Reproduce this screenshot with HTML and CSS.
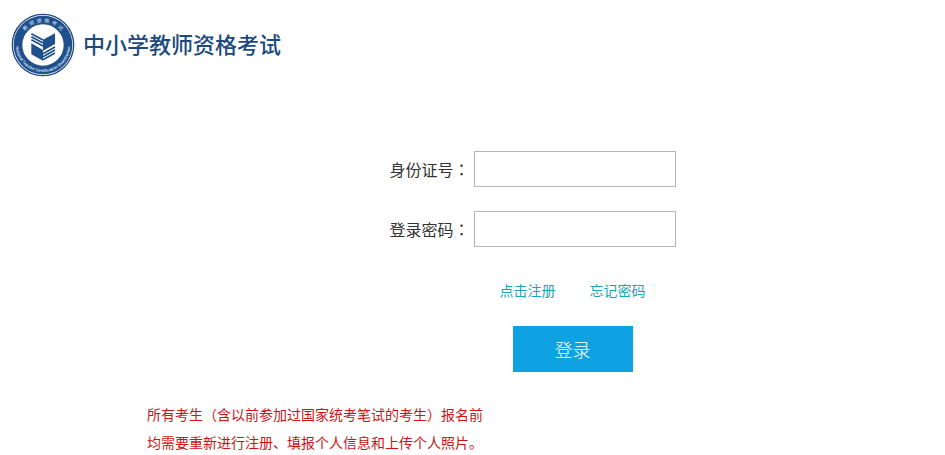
FILE: index.html
```html
<!DOCTYPE html>
<html lang="zh-CN">
<head>
    <meta charset="UTF-8">
    <meta name="viewport" content="width=device-width, initial-scale=1.0">
    <title>中小学教师资格考试</title>
    <link rel="stylesheet" href="styles.css">
</head>
<body>
    <header class="header">
        <svg class="logo" viewBox="0 0 192 192" aria-hidden="true">
            <defs>
                <path id="arcTop" d="M27 110 A70 70 0 1 1 165 110" />
                <path id="arcBottom" d="M15 82 A82 82 0 1 0 177 82" />
            </defs>
            <circle cx="96" cy="96" r="92" fill="#fff" stroke="#204a80" stroke-width="4" />
            <circle cx="96" cy="96" r="75" fill="none" stroke="#1f4f8c" stroke-width="26" />
            <text class="logo-cn"><textPath href="#arcTop" startOffset="50%" text-anchor="middle">教&#160; 师&#160; 资&#160; 格&#160; 考&#160; 试</textPath></text>
            <text class="logo-en"><textPath href="#arcBottom" startOffset="50%" text-anchor="middle">National Teacher Certification Examination</textPath></text>
            <!-- book -->
            <g fill="#1f4f8c">
                <path d="M96 80 L132 61 V93 L96 113 Z" />
                <path d="M61 91 L96 111 V143 L61 124 Z" />
            </g>
            <g fill="none" stroke="#1f4f8c" stroke-width="5">
                <path d="M61 62 L96 81" />
                <path d="M61 71 L96 90" />
                <path d="M61 80 L96 99" />
                <path d="M96 122 L132 102" />
                <path d="M96 131 L132 111" />
                <path d="M96 140 L132 120" />
            </g>
        </svg>
        <h1 class="title">中小学教师资格考试</h1>
    </header>

    <main>
        <form class="login">
            <div class="field">
                <label for="idNumber">身份证号<span class="colon" lang="zh-TW">：</span></label>
                <input type="text" id="idNumber">
            </div>
            <div class="field">
                <label for="password">登录密码<span class="colon" lang="zh-TW">：</span></label>
                <input type="password" id="password">
            </div>
            <div class="actions">
                <div class="links">
                    <a href="#">点击注册</a>
                    <a href="#">忘记密码</a>
                </div>
                <button type="submit">登录</button>
            </div>
        </form>

        <p class="notice">所有考生（含以前参加过国家统考笔试的考生）报名前<br>均需要重新进行注册、填报个人信息和上传个人照片。</p>
    </main>
</body>
</html>
```

FILE: styles.css
```css
body {
    margin: 0;
    background: #fff;
    color: #333;
    font-family: "Noto Sans CJK SC", "Liberation Sans", sans-serif;
}
.header {
    display: flex;
    align-items: center;
    gap: 8px;
    padding: 13px 11px 0;
}
.logo {
    width: 64px;
    height: 64px;
}
.logo-cn {
    fill: #dbe6f2;
    font-size: 15px;
}
.logo-en {
    fill: #dbe6f2;
    font-family: "Liberation Sans", sans-serif;
    font-size: 12px;
    font-weight: bold;
}
.title {
    margin: 0;
    padding-bottom: 4px;
    color: #1c4a7e;
    font-size: 22px;
    font-weight: 500;
    line-height: 32px;
}
.login {
    display: flex;
    flex-direction: column;
    align-items: center;
    gap: 24px;
    padding: 74px 0 0 120px;
}
.field {
    display: flex;
    align-items: center;
    gap: 4px;
    font-size: 16px;
}
.colon {
    font-family: "Noto Sans CJK TC", sans-serif;
}
input {
    box-sizing: border-box;
    width: 202px;
    height: 36px;
    padding: 0 8px;
    border: 1px solid #b0b5bf;
    font-size: 16px;
}
.actions {
    display: flex;
    flex-direction: column;
    align-items: center;
    gap: 24px;
    padding: 7px 0 0 80px;
}
.links {
    display: flex;
    gap: 34px;
    font-size: 14px;
    line-height: 24px;
}
a {
    color: #1aa3b8;
    text-decoration: none;
}
button {
    width: 120px;
    height: 46px;
    border: none;
    background: #0fa2e2;
    color: #fff;
    font-family: inherit;
    font-size: 18px;
    font-weight: 300;
    cursor: pointer;
}
.notice {
    margin: 28px 0 0;
    padding-left: 147px;
    color: #cc1414;
    font-size: 14px;
    line-height: 28px;
}
```
